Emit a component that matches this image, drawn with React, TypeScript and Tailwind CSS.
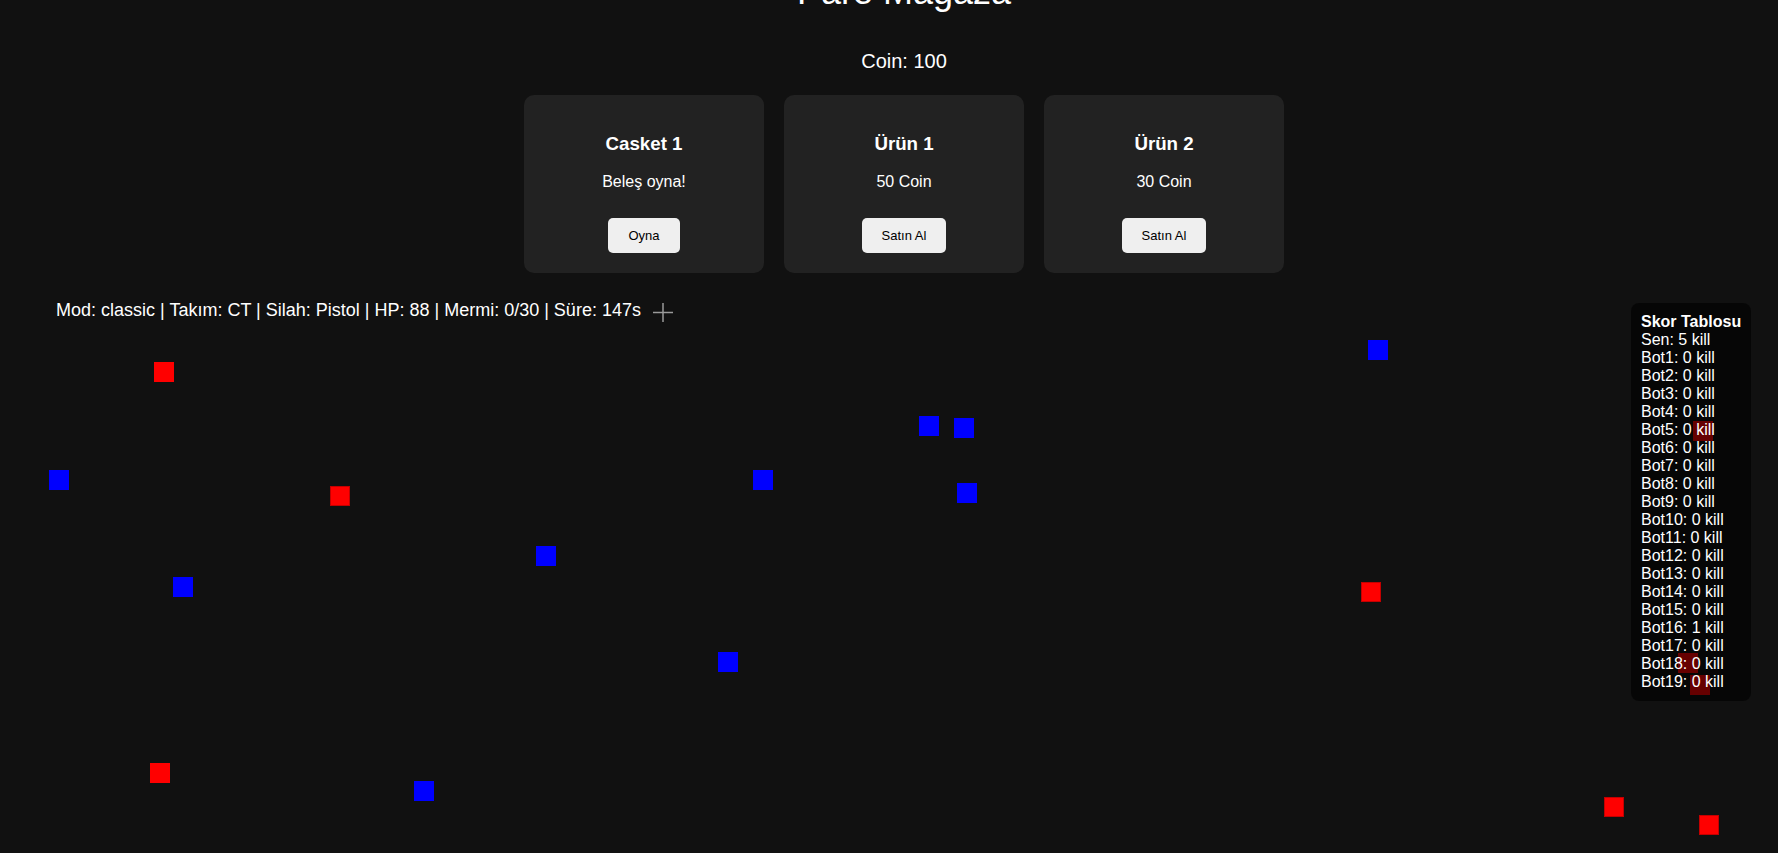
const squares: { x: number; y: number; c: "r" | "b"; edge?: boolean }[] = [
  { x: 154, y: 79, c: "r" },
  { x: 49, y: 187, c: "b" },
  { x: 330, y: 203, c: "r", edge: true },
  { x: 919, y: 133, c: "b" },
  { x: 954, y: 135, c: "b" },
  { x: 957, y: 200, c: "b" },
  { x: 1368, y: 57, c: "b" },
  { x: 753, y: 187, c: "b" },
  { x: 536, y: 263, c: "b" },
  { x: 173, y: 294, c: "b" },
  { x: 1361, y: 299, c: "r", edge: true },
  { x: 718, y: 369, c: "b" },
  { x: 150, y: 480, c: "r" },
  { x: 414, y: 498, c: "b" },
  { x: 1604, y: 514, c: "r", edge: true },
  { x: 1699, y: 532, c: "r", edge: true },
  { x: 1693, y: 138, c: "r" },
  { x: 1678, y: 370, c: "r" },
  { x: 1690, y: 392, c: "r" },
];

const scores = [
  "Sen: 5 kill",
  ...Array.from({ length: 19 }, (_, i) => `Bot${i + 1}: ${i === 15 ? 1 : 0} kill`),
];

const items = [
  { title: "Casket 1", text: "Beleş oyna!", btn: "Oyna" },
  { title: "Ürün 1", text: "50 Coin", btn: "Satın Al" },
  { title: "Ürün 2", text: "30 Coin", btn: "Satın Al" },
];

export default function App() {
  return (
    <div className="relative h-[853px] w-full overflow-hidden bg-[#111111] font-['Liberation_Sans',Arial,sans-serif] text-white">
      {/* mağaza */}
      <div className="flex w-[1808px] flex-col items-center text-center">
        <h1 className="mt-[-29px] text-[36px] leading-[41px]">Pare Mağaza</h1>
        <p className="mt-[38px] text-[20px] leading-[23px]">Coin: 100</p>
        <div className="mt-[22px] flex gap-5">
          {items.map((it) => (
            <div
              key={it.title}
              className="flex w-[240px] flex-col items-center rounded-[10px] bg-[#222222] pt-[38px] pb-5"
            >
              <h3 className="text-[18.72px] font-bold leading-[22px]">{it.title}</h3>
              <p className="mt-[18px] text-[16px] leading-[18px]">{it.text}</p>
              <button className="mt-[27px] h-[35px] rounded-[5px] bg-[#efefef] px-5 text-[13px] text-black">
                {it.btn}
              </button>
            </div>
          ))}
        </div>
      </div>

      {/* oyun alanı */}
      <div className="relative mt-[10px] h-[570px] w-full">
        {squares.map((s, i) => (
          <div
            key={i}
            className={`absolute h-5 w-5 ${s.c === "r" ? "bg-[#ff0000]" : "bg-[#0000ff]"} ${
              s.edge ? "border border-[#c40000]" : ""
            }`}
            style={{ left: s.x, top: s.y }}
          />
        ))}

        <div className="absolute left-[56px] top-[17px] text-[18px] leading-[21px]">
          Mod: classic | Takım: CT | Silah: Pistol | HP: 88 | Mermi: 0/30 | Süre: 147s
        </div>

        <svg className="absolute left-[653px] top-[20px]" width="20" height="19" viewBox="0 0 20 19">
          <line x1="0" y1="9.5" x2="20" y2="9.5" stroke="#9a9a9a" strokeWidth="1.5" />
          <line x1="10" y1="0" x2="10" y2="19" stroke="#9a9a9a" strokeWidth="1.5" />
        </svg>

        <div className="absolute left-[1631px] top-[20px] whitespace-nowrap rounded-[8px] bg-black/60 p-2.5 text-[16px] leading-[18px]">
          <div className="font-bold">Skor Tablosu</div>
          {scores.map((s) => (
            <div key={s}>{s}</div>
          ))}
        </div>
      </div>
    </div>
  );
}
